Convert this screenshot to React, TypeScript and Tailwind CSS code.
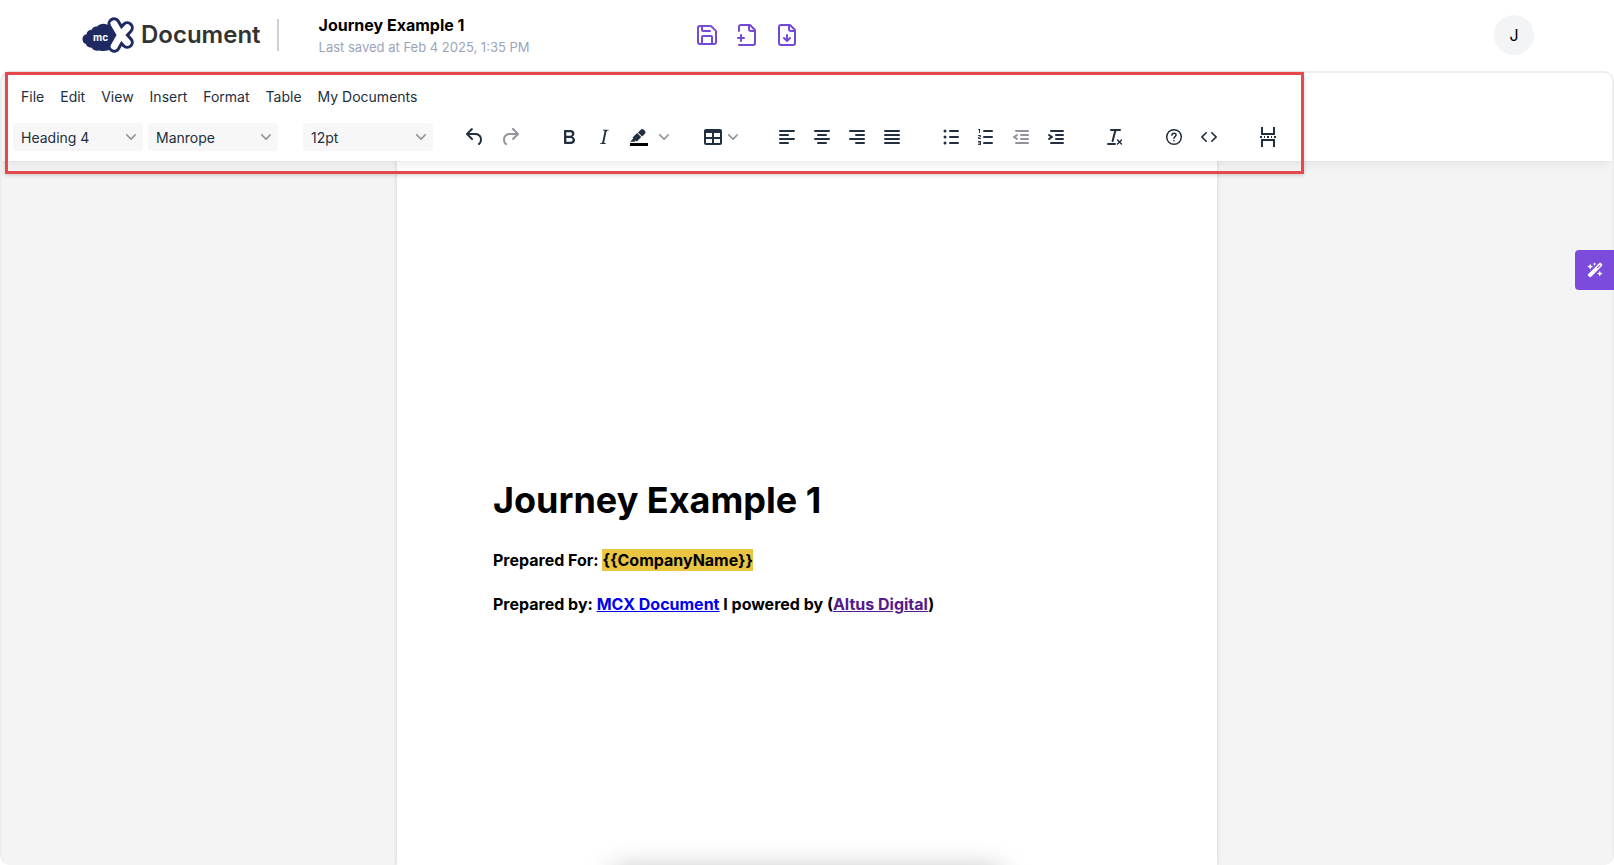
import React, { useState } from 'react';
import { Save } from 'lucide-react';

const MENUS = ["File", "Edit", "View", "Insert", "Format", "Table", "My Documents"];

interface IconProps {
  d: string;
  className?: string;
}

// 24px filled toolbar glyph
const Icon: React.FC<IconProps> = ({ d, className = "" }) => (
  <svg width="24" height="24" viewBox="0 0 24 24" fill="currentColor" className={className} aria-hidden="true">
    <path fillRule="evenodd" d={d} />
  </svg>
);

const Chevron = ({ className = "" }: { className?: string }) => (
  <svg width="10" height="10" viewBox="0 0 10 10" fill="currentColor" className={`text-[#91959b] ${className}`} aria-hidden="true">
    <path d="M8.7 2.2c.3-.3.8-.3 1 0 .4.4.4.9 0 1.2L5.7 7.8c-.3.3-.9.3-1.2 0L.2 3.4a.8.8 0 0 1 0-1.2c.3-.3.8-.3 1.1 0L5 6l3.7-3.8Z" />
  </svg>
);

const PATHS = {
  undo: "M6.4 8H12c3.7 0 6.2 2 6.8 5.1.6 2.7-.4 5.6-2.3 6.8a1 1 0 0 1-1-1.8c1.1-.6 1.8-2.7 1.4-4.6-.5-2.1-2.1-3.5-4.9-3.5H6.4l3.3 3.3a1 1 0 1 1-1.4 1.4l-5-5a1 1 0 0 1 0-1.4l5-5a1 1 0 0 1 1.4 1.4L6.4 8Z",
  redo: "M17.6 10H12c-2.8 0-4.4 1.4-4.9 3.5-.4 2 .3 4 1.4 4.6a1 1 0 1 1-1 1.8c-2-1.2-2.9-4.1-2.3-6.8.6-3 3-5.1 6.8-5.1h5.6l-3.3-3.3a1 1 0 1 1 1.4-1.4l5 5a1 1 0 0 1 0 1.4l-5 5a1 1 0 0 1-1.4-1.4l3.3-3.3Z",
  bold: "M7.8 19c-.3 0-.5 0-.6-.2l-.2-.5V5.7c0-.2 0-.4.2-.5l.6-.2h5c1.5 0 2.7.3 3.5 1 .7.6 1.1 1.4 1.1 2.5a3 3 0 0 1-.6 1.9c-.4.6-1 1-1.6 1.2.4.1.9.3 1.3.6s.8.7 1 1.2c.4.4.5 1 .5 1.6 0 1.3-.4 2.3-1.3 3-.8.7-2.1 1-3.8 1H7.8Zm5-8.3c.6 0 1.2-.1 1.6-.5.4-.3.6-.7.6-1.3 0-1.1-.8-1.7-2.3-1.7H9.3v3.5h3.4Zm.5 6c.7 0 1.3-.1 1.7-.4.4-.4.6-.9.6-1.5s-.2-1-.7-1.4c-.4-.3-1-.4-2-.4H9.4v3.8h4Z",
  italic: "m16.7 4.7-.1.9h-.3c-.6 0-1 0-1.4.3-.3.3-.4.6-.5 1.1l-2.1 9.8v.6c0 .5.4.8 1.4.8h.2l-.2.8H8l.2-.8h.2c1.1 0 1.8-.5 2-1.5l2-9.8.1-.5c0-.6-.4-.8-1.4-.8h-.3l.2-.9h5.8Z",
  table: "M19 4a2 2 0 0 1 2 2v12a2 2 0 0 1-2 2H5a2 2 0 0 1-2-2V6c0-1.1.9-2 2-2h14ZM5 14v4h6v-4H5Zm14 0h-6v4h6v-4Zm0-6h-6v4h6V8ZM5 12h6V8H5v4Z",
  alignLeft: "M5 5h14a1 1 0 0 1 0 2H5a1 1 0 1 1 0-2Zm0 4h8a1 1 0 0 1 0 2H5a1 1 0 1 1 0-2Zm0 8h8a1 1 0 0 1 0 2H5a1 1 0 0 1 0-2Zm0-4h14a1 1 0 0 1 0 2H5a1 1 0 0 1 0-2Z",
  alignCenter: "M5 5h14a1 1 0 0 1 0 2H5a1 1 0 1 1 0-2Zm3 4h8a1 1 0 0 1 0 2H8a1 1 0 1 1 0-2Zm0 8h8a1 1 0 0 1 0 2H8a1 1 0 0 1 0-2Zm-3-4h14a1 1 0 0 1 0 2H5a1 1 0 0 1 0-2Z",
  alignRight: "M5 5h14a1 1 0 0 1 0 2H5a1 1 0 1 1 0-2Zm6 4h8a1 1 0 0 1 0 2h-8a1 1 0 0 1 0-2Zm0 8h8a1 1 0 0 1 0 2h-8a1 1 0 0 1 0-2Zm-6-4h14a1 1 0 0 1 0 2H5a1 1 0 0 1 0-2Z",
  alignJustify: "M5 5h14a1 1 0 0 1 0 2H5a1 1 0 1 1 0-2Zm0 4h14a1 1 0 0 1 0 2H5a1 1 0 1 1 0-2Zm0 4h14a1 1 0 0 1 0 2H5a1 1 0 0 1 0-2Zm0 4h14a1 1 0 0 1 0 2H5a1 1 0 0 1 0-2Z",
  bullets: "M11 5h8a1 1 0 0 1 0 2h-8a1 1 0 0 1 0-2Zm0 6h8a1 1 0 0 1 0 2h-8a1 1 0 0 1 0-2Zm0 6h8a1 1 0 0 1 0 2h-8a1 1 0 0 1 0-2ZM4.5 6a1.5 1.5 0 1 1 3 0 1.5 1.5 0 0 1-3 0Zm0 6a1.5 1.5 0 1 1 3 0 1.5 1.5 0 0 1-3 0Zm0 6a1.5 1.5 0 1 1 3 0 1.5 1.5 0 0 1-3 0Z",
  numbers: "M10 17h8a1 1 0 0 1 0 2h-8a1 1 0 0 1 0-2Zm0-6h8a1 1 0 0 1 0 2h-8a1 1 0 0 1 0-2Zm0-6h8a1 1 0 0 1 0 2h-8a1 1 0 1 1 0-2ZM6 4v3.5c0 .3-.2.5-.5.5a.5.5 0 0 1-.5-.5V5h-.5a.5.5 0 0 1 0-1H6Zm-1 8.8.2.2h1.3c.3 0 .5.2.5.5s-.2.5-.5.5H4.9a1 1 0 0 1-.9-1V13c0-.4.3-.8.6-1l1.2-.4.2-.3a.2.2 0 0 0-.2-.2H4.5a.5.5 0 0 1-.5-.5c0-.3.2-.5.5-.5h1.6c.5 0 .9.4.9 1v.1c0 .4-.3.8-.6 1l-1.2.4-.2.3ZM7 17v2c0 .6-.4 1-1 1H4.5a.5.5 0 0 1 0-1h1.2c.2 0 .3-.1.3-.3 0-.2-.1-.3-.3-.3H4.4a.4.4 0 1 1 0-.8h1.3c.2 0 .3-.1.3-.3 0-.2-.1-.3-.3-.3H4.5a.5.5 0 1 1 0-1H6c.6 0 1 .4 1 1Z",
  outdent: "M7 5h12a1 1 0 0 1 0 2H7a1 1 0 1 1 0-2Zm5 4h7a1 1 0 0 1 0 2h-7a1 1 0 0 1 0-2Zm0 4h7a1 1 0 0 1 0 2h-7a1 1 0 0 1 0-2Zm-5 4h12a1 1 0 0 1 0 2H7a1 1 0 0 1 0-2Zm1.6-3.8a1 1 0 0 1-1.2 1.6l-3-2a1 1 0 0 1 0-1.6l3-2a1 1 0 0 1 1.2 1.6L6.8 12l1.8 1.2Z",
  indent: "M7 5h12a1 1 0 0 1 0 2H7a1 1 0 1 1 0-2Zm5 4h7a1 1 0 0 1 0 2h-7a1 1 0 0 1 0-2Zm0 4h7a1 1 0 0 1 0 2h-7a1 1 0 0 1 0-2Zm-5 4h12a1 1 0 0 1 0 2H7a1 1 0 0 1 0-2Zm-2.6-3.8L6.2 12l-1.8-1.2a1 1 0 0 1 1.2-1.6l3 2a1 1 0 0 1 0 1.6l-3 2a1 1 0 1 1-1.2-1.6Z",
  clear: "M13.2 6a1 1 0 0 1 0 .2l-2.6 10a1 1 0 0 1-1 .8h-.2a.8.8 0 0 1-.8-1l2.6-10H8a1 1 0 1 1 0-2h9a1 1 0 0 1 0 2h-3.8ZM5 18h7a1 1 0 0 1 0 2H5a1 1 0 0 1 0-2Zm13 1.5L16.5 18 15 19.5a.7.7 0 0 1-1-1l1.5-1.5-1.5-1.5a.7.7 0 0 1 1-1l1.5 1.5 1.5-1.5a.7.7 0 0 1 1 1L17.5 17l1.5 1.5a.7.7 0 0 1-1 1Z",
  code: "M9.8 15.7c.3.3.3.8 0 1-.3.4-.9.4-1.2 0l-4.4-4.1a.8.8 0 0 1 0-1.2l4.4-4.2c.3-.3.9-.3 1.2 0 .3.3.3.8 0 1.1L6 12l3.8 3.7ZM14.2 15.7c-.3.3-.3.8 0 1 .4.4.9.4 1.2 0l4.4-4.1c.3-.3.3-.9 0-1.2l-4.4-4.2a.8.8 0 0 0-1.2 0c-.3.3-.3.8 0 1.1L18 12l-3.8 3.7Z",
  pageBreak: "M5 2h2v6h10V2h2v8H5V2Zm0 12h14v8h-2v-6H7v6H5v-8ZM4 11h2v2H4v-2Zm4 0h1v2H8v-2Zm3 0h2v2h-2v-2Zm4 0h1v2h-1v-2Zm3 0h2v2h-2v-2Z",
};

interface ToolButtonProps {
  label: string;
  disabled?: boolean;
  children: React.ReactNode;
}

const ToolButton: React.FC<ToolButtonProps> = ({ label, disabled = false, children }) => (
  <button
    type="button"
    aria-label={label}
    disabled={disabled}
    className="flex h-7 w-[34px] items-center justify-center rounded hover:bg-gray-100 disabled:text-[#91959b]"
  >
    {children}
  </button>
);

// Icon button with a separate drop-down arrow next to it
const SplitButton: React.FC<ToolButtonProps> = ({ label, children }) => (
  <div className="flex w-[49px]">
    <ToolButton label={label}>{children}</ToolButton>
    <button type="button" aria-label={`${label} options`} className="flex flex-1 items-center justify-center">
      <Chevron />
    </button>
  </div>
);

const Group = ({ children }: { children: React.ReactNode }) => (
  <div className="flex shrink-0 items-center gap-px">{children}</div>
);

interface ToolSelectProps {
  label: string;
  options: string[];
}

const ToolSelect: React.FC<ToolSelectProps> = ({ label, options }) => {
  const [value, setValue] = useState(options[0]);

  return (
    <div className="relative w-[130px] shrink-0">
      <select
        aria-label={label}
        value={value}
        onChange={(e) => setValue(e.target.value)}
        className="block h-7 w-full appearance-none rounded bg-[#f7f7f7] pt-[2px] pl-2 pr-6 text-sm focus:outline-none"
      >
        {options.map((o) => <option key={o}>{o}</option>)}
      </select>
      <Chevron className="pointer-events-none absolute right-[7px] top-[9px]" />
    </div>
  );
};

const Logo = () => (
  <a href="#" className="flex items-center gap-[7px] text-[#333333]">
    <svg width="52" height="36" viewBox="0 0 52 36" aria-hidden="true">
      <path
        fill="#1f2a63"
        d="M0.5 22.5C0.2 19.6 2 17.8 4.6 17.3 4.6 14.6 7 12.8 9.8 12.8 10.2 10.5 12.6 9 15.2 9.6 17.5 6.8 21.5 6 25 7.5L36 12 36 24 28 32.5C26 33.8 22 34.4 17.2 33.4 14.4 34.4 11 33.4 9.8 30.8 7 30.8 4.4 29.6 4 27 2 26.4 0.6 25 0.5 22.5Z"
      />
      <g fill="none" strokeLinecap="round" strokeLinejoin="round">
        <path stroke="#1f2a63" strokeWidth="13" d="M32 6.8 38.6 18 45.3 25.3M45.3 10.8 38.6 18 32.2 29.2" />
        <path stroke="#fff" strokeWidth="7" d="M32 6.8 38.6 18 45.3 25.3M45.3 10.8 38.6 18 32.2 29.2" />
      </g>
      <text x="11" y="24" fill="#fff" fontFamily="Inter, sans-serif" fontWeight="700" fontSize="10">mc</text>
    </svg>
    <span className="text-2xl font-semibold">Document</span>
  </a>
);

const HeaderFileIcon = ({ d }: { d: string }) => (
  <svg width="24" height="24" viewBox="0 0 24 24" fill="none" stroke="currentColor" strokeWidth="2" strokeLinecap="round" strokeLinejoin="round" aria-hidden="true">
    <path d={d} />
    <path d="M14 2v4a2 2 0 0 0 2 2h4" />
  </svg>
);

const Header = () => (
  <header className="flex h-[71px] shrink-0 items-center bg-white px-20 pb-px">
    <div className="flex w-[615px] shrink-0 items-center pl-[2px]">
      <Logo />
      <div className="ml-4 h-8 w-[2px] bg-[#cdd0d6]" />
      <div className="ml-10 pt-px">
        <h1 className="text-base leading-[22px] font-bold text-black">Journey Example 1</h1>
        <p className="text-[13px] leading-[22px] text-[#9aa5bb]">Last saved at Feb 4 2025, 1:35 PM</p>
      </div>
    </div>
    <div className="flex gap-4 text-[#7549d8]">
      <button type="button" aria-label="Save"><Save size={24} /></button>
      <button type="button" aria-label="New document">
        <HeaderFileIcon d="M4 22h14a2 2 0 0 0 2-2V7l-5-5H6a2 2 0 0 0-2 2v4M3 15h6M6 12v6" />
      </button>
      <button type="button" aria-label="Download">
        <HeaderFileIcon d="M15 2H6a2 2 0 0 0-2 2v16a2 2 0 0 0 2 2h12a2 2 0 0 0 2-2V7ZM12 18v-6m-3 3 3 3 3-3" />
      </button>
    </div>
    <button type="button" className="ml-auto size-10 rounded-full bg-gray-100 text-base text-black">J</button>
  </header>
);

const Toolbar = () => (
  <div className="relative z-10 flex flex-col gap-3 rounded-t-lg bg-white py-[10px] pl-[11px] text-[#222f3e] shadow-[0_2px_2px_-2px_rgba(34,47,62,0.1),0_8px_8px_-4px_rgba(34,47,62,0.07)]">
    <nav className="flex">
      {MENUS.map((m) => (
        <button key={m} type="button" className="h-7 rounded px-2 text-sm hover:bg-gray-100">{m}</button>
      ))}
    </nav>
    <div className="flex items-center gap-[25px]">
      <div className="flex gap-[5px]">
        <ToolSelect label="Block format" options={["Heading 4", "Paragraph", "Heading 1", "Heading 2", "Heading 3"]} />
        <ToolSelect label="Font" options={["Manrope", "Arial", "Georgia"]} />
      </div>
      <ToolSelect label="Font size" options={["12pt", "10pt", "14pt", "18pt"]} />
      <Group>
        <ToolButton label="Undo"><Icon d={PATHS.undo} /></ToolButton>
        <ToolButton label="Redo" disabled><Icon d={PATHS.redo} /></ToolButton>
      </Group>
      <Group>
        <ToolButton label="Bold"><Icon d={PATHS.bold} /></ToolButton>
        <ToolButton label="Italic"><Icon d={PATHS.italic} /></ToolButton>
        <SplitButton label="Highlight">
          <svg width="24" height="24" viewBox="0 0 24 24" fill="currentColor" aria-hidden="true">
            <path fill="#000" d="M3 18h18v3H3z" />
            <path d="M7.7 16.7H3l3.3-3.3-.7-.8L10.2 8l4 4.1-4 4.2c-.2.2-.6.2-.8 0l-.6-.7-1.1 1.1Zm5-7.5L11 7.4l3-2.9a2 2 0 0 1 2.6 0L18 6c.7.7.7 2 0 2.7l-2.9 2.9-1.8-1.8-.5-.6Z" />
          </svg>
        </SplitButton>
      </Group>
      <Group>
        <button type="button" aria-label="Table" className="flex h-7 w-[49px] items-center gap-[3px] rounded pl-[5px] hover:bg-gray-100">
          <Icon d={PATHS.table} />
          <Chevron />
        </button>
      </Group>
      <Group>
        <ToolButton label="Align left"><Icon d={PATHS.alignLeft} /></ToolButton>
        <ToolButton label="Align center"><Icon d={PATHS.alignCenter} /></ToolButton>
        <ToolButton label="Align right"><Icon d={PATHS.alignRight} /></ToolButton>
        <ToolButton label="Justify"><Icon d={PATHS.alignJustify} /></ToolButton>
      </Group>
      <Group>
        <ToolButton label="Bullet list"><Icon d={PATHS.bullets} /></ToolButton>
        <ToolButton label="Numbered list"><Icon d={PATHS.numbers} /></ToolButton>
        <ToolButton label="Decrease indent" disabled><Icon d={PATHS.outdent} /></ToolButton>
        <ToolButton label="Increase indent"><Icon d={PATHS.indent} /></ToolButton>
      </Group>
      <Group>
        <ToolButton label="Clear formatting"><Icon d={PATHS.clear} /></ToolButton>
      </Group>
      <Group>
        <ToolButton label="Help">
          <svg width="24" height="24" viewBox="0 0 24 24" fill="none" stroke="currentColor" strokeWidth="1.5" strokeLinecap="round" strokeLinejoin="round" aria-hidden="true">
            <circle cx="12" cy="12" r="7.3" />
            <path d="M9.9 10.2c0-1.2.9-2 2.1-2s2.1.8 2.1 1.9c0 1.5-2.1 1.5-2.1 3.2" />
            <path d="M12 15.6v.1" />
          </svg>
        </ToolButton>
        <ToolButton label="Source code"><Icon d={PATHS.code} /></ToolButton>
      </Group>
      <Group>
        <ToolButton label="Page break"><Icon d={PATHS.pageBreak} /></ToolButton>
      </Group>
    </div>
  </div>
);

const Page = () => (
  <article className="mx-auto w-full max-w-[820px] flex-1 bg-white px-24 pt-[313px] font-bold text-black shadow-[0_0_4px_rgba(0,0,0,0.15)]">
    <h2 className="text-4xl leading-[52px]">Journey Example 1</h2>
    <p className="mt-[23px] text-base leading-[22px]">
      Prepared For: <mark className="bg-[#e9c542] py-px text-black">{"{{CompanyName}}"}</mark>
    </p>
    <p className="mt-[22px] text-base leading-[22px]">
      Prepared by: <a href="#" className="text-[#0000ee] underline">MCX Document</a> I powered by (
      <a href="#" className="text-[#551a8b] underline">Altus Digital</a>)
    </p>
  </article>
);

export default function App() {
  return (
    <div className="relative flex h-screen flex-col overflow-hidden bg-white font-['Inter',sans-serif]">
      <Header />
      <main className="relative flex min-h-0 flex-1 flex-col rounded-[10px] border-2 border-b-0 border-[#eeeeee] bg-[#f4f4f4]">
        <Toolbar />
        <Page />
        {/* Highlight frame around the editing tools */}
        <div className="pointer-events-none absolute -top-px left-[3px] z-20 h-[102px] w-[1299px] border-3 border-[#e5494d] shadow-[0_1px_4px_rgba(0,0,0,0.2)]" />
      </main>
      <button type="button" aria-label="AI assistant" className="absolute right-0 top-[250px] flex h-10 w-[39px] items-center justify-center rounded-l bg-[#7c4bdb] text-white">
        <svg width="16" height="16" viewBox="0 0 16 16" fill="currentColor" aria-hidden="true">
          <path fillRule="evenodd" d="M12.1 1.2c.6-.6 1.4-.6 2 0l.8.8c.6.6.6 1.4 0 2L4.2 14.8c-.6.6-1.4.6-2 0l-.9-.9c-.6-.6-.6-1.4 0-2L12.1 1.2Zm.9 1.4L9.8 5.8l.6.6 3.2-3.2-.6-.6Z" />
          <path d="m3.2 1.6.9 2.1 2.1.9-2.1.9-.9 2.1-.9-2.1-2.1-.9 2.1-.9.9-2.1ZM7.6.2l.5 1.4 1.4.5-1.4.5-.5 1.4-.5-1.4-1.4-.5 1.4-.5.5-1.4ZM12.8 8.6l.9 2.1 2.1.9-2.1.9-.9 2.1-.9-2.1-2.1-.9 2.1-.9.9-2.1Z" />
        </svg>
      </button>
      {/* Bottom panel, docked just below the fold */}
      <div className="absolute left-1/2 top-full mt-1 h-12 w-[390px] -translate-x-1/2 rounded-lg bg-white shadow-[0_0_28px_rgba(0,0,0,0.25)]" />
    </div>
  );
}
